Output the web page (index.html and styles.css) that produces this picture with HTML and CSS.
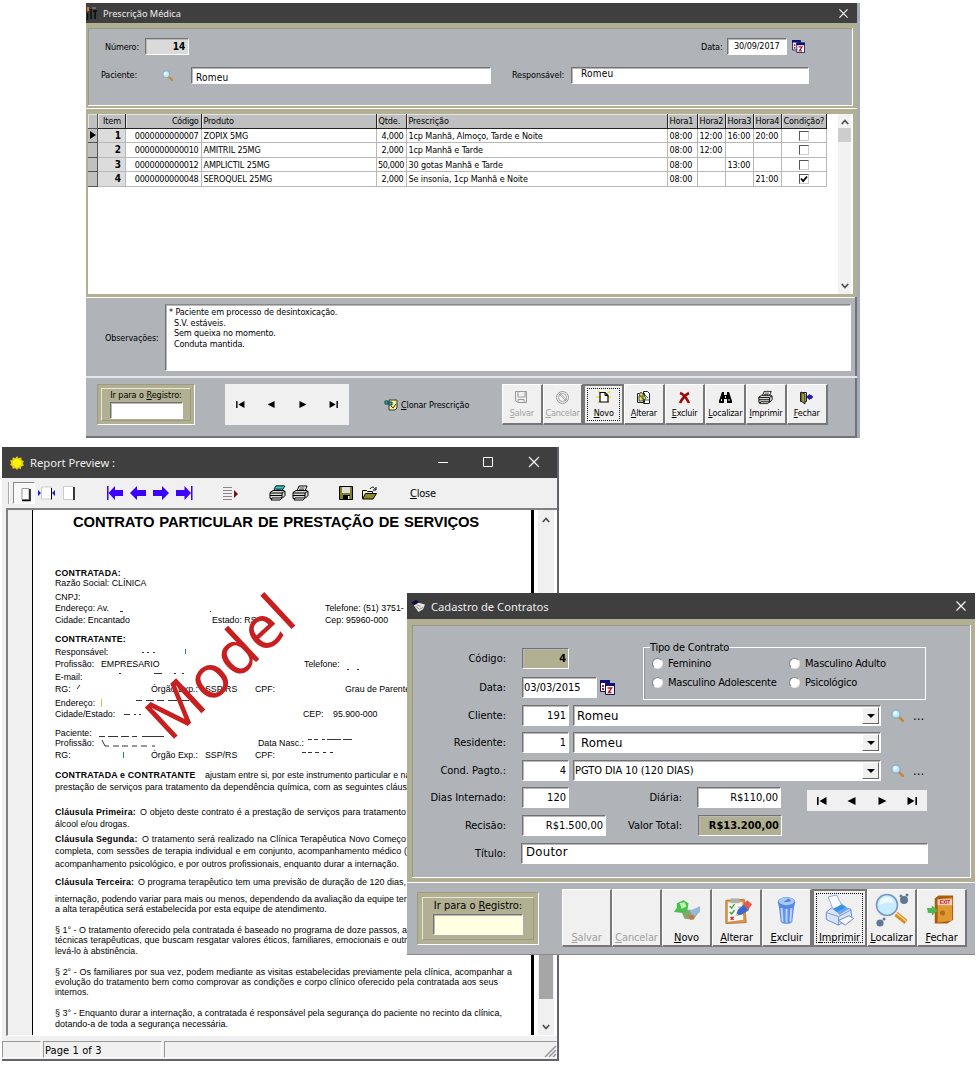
FILE: index.html
```html
<!DOCTYPE html>
<html lang="pt-BR">
<head>
<meta charset="utf-8">
<title>Prescrição Médica</title>
<link rel="stylesheet" href="styles.css">
</head>
<body>
<svg width="0" height="0" class="defs">
  <symbol id="lens" viewBox="0 0 12 12"><path d="M7 7l4 4" stroke="#c9862c" stroke-width="2.2" stroke-linecap="round"/><circle cx="4.600" cy="4.600" r="3.800" fill="#bfe6fb" stroke="#7aa9c8"/><circle cx="4" cy="3.800" r="1.700" fill="#f4fcff"/></symbol>
  <symbol id="cal" viewBox="0 0 15 15"><path d="M.5.5h9v11h-9z" fill="#fff" stroke="#101060"/><path d="M0 0h10v3H0z" fill="#10106e"/><path d="M2 5h2v2H2zM2 8h2v2H2z" fill="#b02030"/><path d="M5.5 3.5h9v11h-9z" fill="#fff" stroke="#101060"/><path d="M5 3h10v3H5z" fill="#10106e"/><path d="M7.500 8h4l-3 4.500h3" fill="none" stroke="#c01828" stroke-width="1.500"/></symbol>
  <symbol id="first" viewBox="0 0 10 8"><path d="M0 0h1.600v8H0zM9.500 0v8L2.500 4z"/></symbol>
  <symbol id="prev" viewBox="0 0 10 8"><path d="M8.500 0v8L.5 4z"/></symbol>
  <symbol id="next" viewBox="0 0 10 8"><path d="M1.500 0v8l8-4z"/></symbol>
  <symbol id="last" viewBox="0 0 10 8"><path d="M8.400 0H10v8H8.400zM.5 0v8l7-4z"/></symbol>
  <symbol id="print" viewBox="0 0 17 16"><path d="M5 6l2-5h8l-2 5z" fill="#fff" stroke="#000"/><path d="M7.500 3h5M7 4.800h5" stroke="#000" stroke-width=".8"/><path d="M1 7.500l3-2h11l1 1v4l-3 3H1z" fill="#d8d8d0" stroke="#000"/><path d="M1 8h12l3-2M13 8v5M1 10.500h12" fill="none" stroke="#000"/><path d="M3 13l-1 2h9l2-2z" fill="#fff" stroke="#000"/></symbol>
  <symbol id="up" viewBox="0 0 8 6"><path d="M.8 5L4 1.500 7.200 5" fill="none" stroke="#505050" stroke-width="1.800"/></symbol>
  <symbol id="down" viewBox="0 0 8 6"><path d="M.8 1L4 4.500 7.200 1" fill="none" stroke="#505050" stroke-width="1.800"/></symbol>
  <symbol id="x" viewBox="0 0 10 10"><path d="M.5.5l9 9M9.500.5l-9 9" stroke="#fff" stroke-width="1.200"/></symbol>
</svg>

<section class="win presc">
  <header class="bar">
    <svg class="app" viewBox="0 0 12 13"><path d="M1 0h2v4H1z" fill="#f06a20"/><path d="M1.500 6v7M5 2v10M9 3v9M7 4h4" stroke="#0c0c0c" stroke-width="1.500" fill="none"/><path d="M6 1h4" stroke="#999"/></svg>
    <h1>Prescrição Médica</h1>
    <svg class="close"><use href="#x"/></svg>
  </header>
  <div class="frame head">
    <div class="row r1"><label>Número:</label><div class="in num">14</div><label class="dt">Data:</label><div class="in date">30/09/2017</div><svg class="cal"><use href="#cal"/></svg></div>
    <div class="row r2"><label>Paciente:</label><svg class="lens"><use href="#lens"/></svg><div class="in pac">Romeu</div><label class="rs">Responsável:</label><div class="in resp">Romeu</div></div>
  </div>
  <div class="gridbox">
    <div class="table">
      <div class="tr th"><i></i><b>Item</b><span class="r">Código</span><span>Produto</span><span>Qtde.</span><span>Prescrição</span><span>Hora1</span><span>Hora2</span><span>Hora3</span><span>Hora4</span><span>Condição?</span></div>
      <div class="tr"><i><svg class="cur" viewBox="0 0 6 8"><path d="M0 0v8l6-4z"/></svg></i><b>1</b><span class="r">0000000000007</span><span>ZOPIX 5MG</span><span class="r">4,000</span><span>1cp Manhã, Almoço, Tarde e Noite</span><span>08:00</span><span>12:00</span><span>16:00</span><span>20:00</span><span class="c"><em></em></span></div>
      <div class="tr"><i></i><b>2</b><span class="r">0000000000010</span><span>AMITRIL 25MG</span><span class="r">2,000</span><span>1cp Manhã e Tarde</span><span>08:00</span><span>12:00</span><span></span><span></span><span class="c"><em></em></span></div>
      <div class="tr"><i></i><b>3</b><span class="r">0000000000012</span><span>AMPLICTIL 25MG</span><span class="r tight">50,000</span><span>30 gotas Manhã e Tarde</span><span>08:00</span><span></span><span>13:00</span><span></span><span class="c"><em></em></span></div>
      <div class="tr"><i></i><b>4</b><span class="r">0000000000048</span><span>SEROQUEL 25MG</span><span class="r">2,000</span><span>Se insonia, 1cp Manhã e Noite</span><span>08:00</span><span></span><span></span><span>21:00</span><span class="c"><em><svg viewBox="0 0 8 8"><path d="M1 3.500l2.200 2.500L7 1.500" fill="none" stroke="#000" stroke-width="1.800"/></svg></em></span></div>
    </div>
    <div class="sb"><svg><use href="#up"/></svg><div class="thumb"></div><svg class="dn"><use href="#down"/></svg></div>
  </div>
  <div class="obs"><label>Observações:</label><div class="in memo">* Paciente em processo de desintoxicação.<br>&nbsp; S.V. estáveis.<br>&nbsp; Sem queixa no momento.<br>&nbsp; Conduta mantida.</div></div>
  <footer class="foot">
    <div class="goto"><div><label>Ir para o <u>R</u>egistro:</label><div class="in"></div></div></div>
    <div class="nav"><svg><use href="#first"/></svg><svg><use href="#prev"/></svg><svg><use href="#next"/></svg><svg><use href="#last"/></svg></div>
    <div class="clone"><svg viewBox="0 0 14 12"><path d="M5 1h8v8l-2 2H5z" fill="#f4f090" stroke="#333"/><path d="M1 2h3v3H1zM5 3h3v3H5z" fill="#48b0b0" stroke="#064848"/><path d="M7 7l2 2 3-4" stroke="#333" fill="none"/></svg><span><u>C</u>lonar Prescrição</span></div>
    <div class="btns">
      <div class="btn off"><svg viewBox="0 0 15 15"><path d="M1.500 1.500h11v11h-9l-2-2zM4 2v5h7V2M4 12V9.500h6V12" fill="none" stroke="#999"/></svg><span><u>S</u>alvar</span></div>
      <div class="btn off"><svg viewBox="0 0 15 15"><circle cx="7.500" cy="7.500" r="6" fill="none" stroke="#999"/><circle cx="7.500" cy="7.500" r="4" fill="none" stroke="#aaa"/><path d="M4 4l7 7M5 3l7 7" stroke="#999" stroke-width=".8"/></svg><span><u>C</u>ancelar</span></div>
      <div class="btn focus"><svg viewBox="0 0 15 15"><path d="M2 1l11 12M14 1L2 13M0 7h15" stroke="#f0e420" stroke-width="1.400"/><path d="M4 2.500h5l3 3V12H4z" fill="#fff" stroke="#000" stroke-width="1.200"/><path d="M9 2.500v3h3" fill="none" stroke="#000"/></svg><span><u>N</u>ovo</span></div>
      <div class="btn"><svg viewBox="0 0 15 15"><path d="M1.500 3.500h7v9h-7zM7.500 1.500h4l2 2v10h-6z" fill="#fff" stroke="#222"/><path d="M3 6h4v5H3zM5 2l5 6-1 2-6-5z" fill="#e8e050" stroke="#554"/><path d="M9 5l3 3M9 10h4" stroke="#087878"/></svg><span><u>A</u>lterar</span></div>
      <div class="btn"><svg viewBox="0 0 15 15"><path d="M3 3c3 1 7 6 9 10M12 3C8 5 5 9 3 13" stroke="#a00808" stroke-width="2.600" fill="none"/></svg><span><u>E</u>xcluir</span></div>
      <div class="btn"><svg viewBox="0 0 15 15"><path d="M4 2h2v3h3V2h2l3 9v2H9V9H6v4H1v-2z"/><path d="M3.500 9v2M11 9v2M7.500 6v2" stroke="#ddd"/></svg><span><u>L</u>ocalizar</span></div>
      <div class="btn"><svg viewBox="0 0 17 16"><use href="#print"/></svg><span><u>I</u>mprimir</span></div>
      <div class="btn"><svg viewBox="0 0 15 15"><path d="M1.500 2.500h6v9h-6z" fill="#fff" stroke="#222"/><path d="M2 2l4 2v10l-4-3z" fill="#9a9a30" stroke="#222"/><path d="M8 7h6M11 4.500L8.500 7 11 9.500M12 5v4" stroke="#1010a0" stroke-width="1.500" fill="none"/></svg><span><u>F</u>echar</span></div>
    </div>
  </footer>
</section>

<section class="win report">
  <header class="bar">
    <svg class="app" viewBox="0 0 16 16"><path d="M8 0l1.800 2.500L13 1.500l.2 3L16 6l-1.300 2.300L16 11l-3 .8-.5 3-3-.8L8 16l-2-2-3 .7-.5-3L0 10l1.300-2L0 5l2.800-.7L3.300 1.500l3 1z" fill="#e8c818"/><circle cx="8" cy="8" r="5" fill="#fff600"/></svg>
    <h1>Report Preview :</h1>
    <svg class="ctl" viewBox="0 0 92 12"><path d="M0 6.500h10" stroke="#fff"/><path d="M45.500 1.500h9v9h-9z" fill="none" stroke="#fff"/><path d="M91 1l10 10M101 1L91 11" stroke="#fff" stroke-width="1.200"/></svg>
  </header>
  <div class="tools">
    <div class="grip"></div>
    <div class="pressed"><svg width="10" height="13"><path d="M1 .5h7v11H1z" fill="#fff" stroke="#999"/><path d="M9 1v11.500H1" fill="none" stroke="#000" stroke-width="1.500"/></svg></div>
    <svg class="t2" width="17" height="14" viewBox="0 0 17 14"><path d="M3.500 1h10v12h-10z" fill="#fff" stroke="#ccc"/><path d="M13.500 2v11.500" stroke="#000"/><path d="M0 4v6l3-3zM17 4v6l-3-3z" fill="#1c1ccf"/></svg>
    <svg class="t3" width="12" height="14"><path d="M.5.5h10v13H.5z" fill="#fff" stroke="#ccc"/><path d="M11 1v13" stroke="#000" stroke-width="1.500"/></svg>
    <svg class="arrows" width="86" height="14" viewBox="0 0 86 14" fill="#3b00ff"><path d="M0 0h1.500v14H0zM1.500 7L8 0v4h8v6H8v4zM23 7l7-7v4h9v6h-9v4zM62 7l-7-7v4h-9v6h9v4zM84 7l-6.500-7v4H69v6h8.500v4zM84 0h1.500v14H84z"/></svg>
    <svg class="t4" width="16" height="13"><path d="M0 .5h9M0 3.500h9M0 6.500h9M0 9.500h9M0 12.500h9" stroke="#888"/><path d="M11 3v8l4-4z" fill="#701010"/></svg>
    <svg class="t5" width="17" height="16"><use href="#print"/><path d="M7 1h9l-2 3H5z" fill="#40c8c8" stroke="#044"/></svg>
    <svg class="t6" width="17" height="16"><use href="#print"/></svg>
    <svg class="t7" width="14" height="14"><path d="M.5.5h13v13H.5z" fill="#808020" stroke="#000"/><path d="M3 1h8v6H3z" fill="#ddd"/><path d="M4 9h7v5H4z"/><path d="M9 10h1.500v3H9z" fill="#fff"/></svg>
    <svg class="t8" width="15" height="14"><path d="M.5 12V4.500h4l1 1h5V8" fill="#f4f0a0" stroke="#000"/><path d="M.5 13l3-5.500h11L11 13z" fill="#8a8a20" stroke="#000"/><path d="M8 3c2-3 4-2 5 0m1-2v3h-3" fill="none" stroke="#000"/></svg>
    <span class="cl"><u>C</u>lose</span>
  </div>
  <div class="view">
    <div class="page">
      <h2>CONTRATO PARTICULAR DE PRESTAÇÃO DE SERVIÇOS</h2>
      <div class="ln g45"><b>CONTRATADA:</b></div>
      <div class="ln g0">Razão Social: CLÍNICA</div>
      <div class="ln g4">CNPJ:</div>
      <div class="ln g1"><span class="w270">Endereço: Av.</span><span>Telefone: (51) 3751-</span></div>
      <div class="ln g2"><span class="w157">Cidade: Encantado</span><span class="w113">Estado: RS</span><span>Cep: 95960-000</span></div>
      <div class="ln g9"><b>CONTRATANTE:</b></div>
      <div class="ln g3">Responsável:</div>
      <div class="ln g2"><span class="w46">Profissão:</span><span class="w203">EMPRESARIO</span><span>Telefone:</span></div>
      <div class="ln g3">E-mail:</div>
      <div class="ln g2"><span class="w96">RG:</span><span class="w54">Órgão Exp.:</span><span class="w50">SSP/RS</span><span class="w90">CPF:</span><span>Grau de Parentesco:</span></div>
      <div class="ln g4">Endereço:</div>
      <div class="ln g1"><span class="w248">Cidade/Estado:</span><span class="w31">CEP:</span><span>95.900-000</span></div>
      <div class="ln g9">Paciente:</div>
      <div class="ln g0"><span class="w203">Profissão:</span><span>Data Nasc.:</span></div>
      <div class="ln g2"><span class="w96">RG:</span><span class="w54">Órgão Exp.:</span><span class="w50">SSP/RS</span><span>CPF:</span></div>
      <div class="ln g10"><b class="w150">CONTRATADA e CONTRATANTE</b><span>ajustam entre si, por este instrumento particular e na melhor</span></div>
      <div class="ln g2"><span class="j w352">prestação de serviços para tratamento da dependência química, com as seguintes cláus</span></div>
      <div class="ln g15"><b class="w85">Cláusula Primeira:</b><span class="j w266">O objeto deste contrato é a prestação de serviços para tratamento</span></div>
      <div class="ln g2">álcool e/ou drogas.</div>
      <div class="ln g5"><b class="w87">Cláusula Segunda:</b><span class="j w264">O tratamento será realizado na Clínica Terapêutica Novo Começo</span></div>
      <div class="ln g2"><span class="j w352">completa, com sessões de terapia individual e em conjunto, acompanhamento médico (</span></div>
      <div class="ln g3"><span class="j w344">acompanhamento psicológico, e por outros profissionais, enquanto durar a internação.</span></div>
      <div class="ln g8"><b class="w83">Cláusula Terceira:</b><span class="j w268">O programa terapêutico tem uma previsão de duração de 120 dias,</span></div>
      <div class="ln g7"><span class="j w352">internação, podendo variar para mais ou menos, dependendo da avaliação da equipe tera</span></div>
      <div class="ln g0"><span class="j w271">a alta terapêutica será estabelecida por esta equipe de atendimento.</span></div>
      <div class="ln g11"><span class="j w352">§ 1° - O tratamento oferecido pela contratada é baseado no programa de doze passos, a</span></div>
      <div class="ln g0"><span class="j w352">técnicas terapêuticas, que buscam resgatar valores éticos, familiares, emocionais e outr</span></div>
      <div class="ln g1">levá-lo à abstinência.</div>
      <div class="ln g11"><span class="j w457">§ 2° - Os familiares por sua vez, podem mediante as visitas estabelecidas previamente pela clínica, acompanhar a</span></div>
      <div class="ln g0"><span class="j w443">evolução do tratamento bem como comprovar as condições e corpo clínico oferecido pela contratada aos seus</span></div>
      <div class="ln g0">internos.</div>
      <div class="ln g11"><span class="j w447">§ 3° - Enquanto durar a internação, a contratada é responsável pela segurança do paciente no recinto da clínica,</span></div>
      <div class="ln g1"><span class="j w173">dotando-a de toda a segurança necessária.</span></div>
      <svg class="specks" width="498" height="260" viewBox="33 510 498 260" fill="none" stroke="#333"><path d="M120 611.500h3M210 611.500h1M142 652.500h2m3 0h2m4 0h2M347 669.500h2m8 0h2M119 673.500h2m33 0h8m12 0h2m6 0h2M80 685l-3 4M136 700.500h6m4 0h8m3 0h7m4 0h9m4 0h8M124 714.500h6m4 0h2m3 0h2M99 736.500h6m3 0h10m3 0h8m3 0h5m5 0h22M102 740l3 6h4m4 0h6m3 0h6m4 0h5m4 0h6m5 0h3M308 739.500h4m2 0h4m4 0h3m2 0h14m2 0h9M302 752.500h4m2 0h4m3 0h4m4 0h3m4 0h3"/><path d="M185.500 649v5M123.500 752v6" stroke="#2080b8"/><path d="M101.500 699v8" stroke="#f0b060"/></svg>
      <div class="model">Model</div>
    </div>
    <div class="sb"><svg><use href="#up"/></svg><div class="thumb"></div><svg class="dn"><use href="#down"/></svg></div>
  </div>
  <footer class="status"><div class="s1"></div><div class="s2">Page 1 of 3</div><div class="s3"><svg width="12" height="12"><path d="M1 12L12 1M5 12l7-7M9 12l3-3" stroke="#999" stroke-width="1.500"/></svg></div></footer>
</section>

<section class="win cad">
  <header class="bar">
    <svg class="app" viewBox="0 0 16 13"><path d="M0 3l5-3 4 2-4 4z" fill="#10103a"/><path d="M3 6l5-3 7 2-2 5-5 3z" fill="#e8e8e0"/><path d="M5 7l4 3 4-2M6 5l4 2" stroke="#888" fill="none"/></svg>
    <h1>Cadastro de Contratos</h1>
    <svg class="close"><use href="#x"/></svg>
  </header>
  <div class="frame">
    <div class="top">
      <div class="tl">
        <div class="row"><label>Código:</label><div class="in cod">4</div></div>
        <div class="row"><label>Data:</label><div class="in dta">03/03/2015</div><svg class="cal"><use href="#cal"/></svg></div>
      </div>
      <fieldset><legend>Tipo de Contrato</legend><div><span><i></i>Feminino</span><span><i></i>Masculino Adulto</span><span><i></i>Masculino Adolescente</span><span><i></i>Psicológico</span></div></fieldset>
    </div>
    <div class="row"><label>Cliente:</label><div class="in n">191</div><div class="in combo rom">Romeu<div class="dd"></div></div><svg class="lens"><use href="#lens"/></svg><span class="dots">...</span></div>
    <div class="row"><label>Residente:</label><div class="in n">1</div><div class="in combo rom res">Romeu<div class="dd"></div></div></div>
    <div class="row c2"><label>Cond. Pagto.:</label><div class="in n">4</div><div class="in combo">PGTO DIA 10 (120 DIAS)<div class="dd"></div></div><svg class="lens"><use href="#lens"/></svg><span class="dots">...</span></div>
    <div class="duo">
      <div class="lft">
        <div class="row"><label>Dias Internado:</label><div class="in n">120</div><label class="l2 e1">Diária:</label><div class="in v1">R$110,00</div></div>
        <div class="row"><label>Recisão:</label><div class="in v0">R$1.500,00</div><label class="l2 e2">Valor Total:</label><div class="in v2">R$13.200,00</div></div>
      </div>
      <div class="nav"><svg><use href="#first"/></svg><svg><use href="#prev"/></svg><svg><use href="#next"/></svg><svg><use href="#last"/></svg></div>
    </div>
    <div class="row"><label>Título:</label><div class="in tit">Doutor</div></div>
  </div>
  <footer class="foot">
    <div class="goto"><div><label>Ir para o <u>R</u>egistro:</label><div class="in"></div></div></div>
    <div class="btns">
      <div class="btn off"><span><u>S</u>alvar</span></div>
      <div class="btn off"><span><u>C</u>ancelar</span></div>
      <div class="btn"><svg viewBox="0 0 32 32"><path d="M6 9l7-3 5 3-1 7 3 1-8 2-9-1 3-4z" fill="#48c050"/><path d="M9 9l5-1 2 4-5 3z" fill="#c0f4b0"/><path d="M11 18l9-2 8 3-5 7-9-1z" fill="#80a868"/><path d="M18 15c4 2 6-1 12-3v6l-7 5z" fill="#98b8d8"/><path d="M18 22l5-1 1 4-4 1z" fill="#d07048"/></svg><span><u>N</u>ovo</span></div>
      <div class="btn"><svg viewBox="0 0 32 32"><path d="M5 6l19-1 2 24-21 1z" fill="#d8954c" stroke="#b87838"/><path d="M7 8h15l1 18-16 2z" fill="#f8f8f8"/><path d="M10 4h9v5h-9z" fill="#b0b0b0"/><path d="M9 12l2 2 3-4M9 18l2 2 3-4" fill="none" stroke="#48a838" stroke-width="1.500"/><path d="M10 23l3 3m0-3l-3 3" stroke="#c83030" stroke-width="1.500"/><path d="M17 13h4M17 17h3" stroke="#aaa"/><path d="M15 22l3-7 6-5 5 6-8 5z" fill="#3868d0"/><path d="M23 10l4-4 5 4-4 6z" fill="#e85848"/><path d="M14 23l2-4 2 2z" fill="#eed0a0"/></svg><span><u>A</u>lterar</span></div>
      <div class="btn"><svg viewBox="0 0 32 32"><path d="M8 11l2 17c2 3 10 3 12 0l2-17z" fill="#6490e8"/><path d="M11 14l1 14M16 15v14M21 14l-1 14" stroke="#b8d4ff" stroke-width="2"/><path d="M7 8c0-7 18-7 18 0l-1 4c-3 3-13 3-16 0z" fill="#5888e0"/><ellipse cx="16" cy="7" rx="8" ry="4" fill="#a8c8f8"/><path d="M13 8l5-4 3 3z" fill="#4878d0"/></svg><span><u>E</u>xcluir</span></div>
      <div class="btn focus"><svg viewBox="0 0 32 34"><path d="M2 18l8-6 18 3 1 8-14 9-13-6z" fill="#d8e4fa" stroke="#6888c8"/><path d="M3 19l12 4 13-7M15 23v9" stroke="#7890d0" fill="none"/><path d="M9 14l9-5 8 6-10 6z" fill="#68a8f0"/><path d="M4 2l9-2 6 12-10 3z" fill="#f8fbff" stroke="#90a8d8"/><path d="M9 15l9-5 5 3-10 5z" fill="#3890e8"/><path d="M15 27l11-5 5 3-9 7z" fill="#f4f8ff" stroke="#7088c0"/></svg><span><u>I</u>mprimir</span></div>
      <div class="btn"><svg class="wide" viewBox="0 0 34 32"><path d="M21 20l10 8" stroke="#d88c20" stroke-width="5"/><path d="M21 19l10 8" stroke="#f8d888" stroke-width="1.500"/><circle cx="12" cy="11" r="10.500" fill="#c8ecff" stroke="#7898c0" stroke-width="1.600"/><path d="M4 11c0-10 14-10 15-2-6-2-9 0-15 2z" fill="#f0fbff"/><circle cx="29" cy="6" r="4" fill="#607890"/><circle cx="26" cy="2" r="1.500" fill="#607890"/><circle cx="32" cy="1" r="1.500" fill="#607890"/><circle cx="5" cy="29" r="3.600" fill="#607890"/><circle cx="9" cy="25" r="1.500" fill="#607890"/></svg><span><u>L</u>ocalizar</span></div>
      <div class="btn"><svg viewBox="0 0 32 32"><path d="M9 4l4-3h15v25l-6 4H9z" fill="#a85c10"/><path d="M12 5l15-2v24l-15 2z" fill="#e09830"/><path d="M12 5h15v6H12z" fill="#f4d0c8"/><text x="19.500" y="10" text-anchor="middle" class="exit">EXIT</text><circle cx="17" cy="19" r="2.600" fill="#b86c18"/><path d="M1 14h5v-3l6 5.500L6 22v-3H2z" fill="#50b850"/></svg><span><u>F</u>echar</span></div>
    </div>
  </footer>
</section>
</body>
</html>
```

FILE: styles.css
```css
* { box-sizing: border-box; }
body { margin: 0; background: #fff; position: relative; width: 980px; height: 1080px; overflow: hidden; font-family: "DejaVu Sans Condensed", "DejaVu Sans", sans-serif; font-stretch: condensed; color: #000; }
.defs { position: absolute; }
.win { position: absolute; display: flex; flex-direction: column; white-space: nowrap; background: #b0b4b8; }
svg { display: block; flex: none; overflow: visible; }
h1, h2 { margin: 0; font-weight: 400; }
.bar { display: flex; align-items: center; background: #3f3f40; color: #fff; flex: none; }
.bar h1 { font-family: "Noto Sans", "Open Sans", sans-serif; font-stretch: normal; color: #eee; margin-right: auto; }
.close { width: 9px; height: 9px; }
.in { background: #fff; border: 1px solid; border-color: #707274 #fff #fff #707274; box-shadow: inset 1px 1px #b8b8b8; flex: none; }
.row { display: flex; align-items: center; }
.btns { display: flex; }
.btn { background: #f0f0f0; border: 1px solid; border-color: #fff #777 #777 #fff; border-right-width: 2px; border-bottom-width: 2px; display: flex; flex-direction: column; align-items: center; flex: none; }
.off { color: #a0a0a0; }
.nav { background: #f0f0f0; display: flex; align-items: center; flex: none; }
.goto { background: #b2b092; border: 1px solid; border-color: #9c9a80 #fff #fff #9c9a80; flex: none; }
.goto > div { border: 1px solid #e8e8d8; border-right-color: #9c9a80; border-bottom-color: #9c9a80; display: flex; flex-direction: column; align-items: center; }
.frame { background: #b0b4b8; border: solid #b2b092; box-shadow: inset -1px -1px #fff, inset 1px 1px #98988c; flex: none; }
.sb { background: #f0f0f0; display: flex; flex-direction: column; align-items: center; flex: none; }
.sb svg { width: 8px; height: 6px; }
.sb .thumb { background: #cdcdcd; width: 100%; }
.sb .dn { margin-top: auto; }

/* prescription window */
.presc { left: 86px; top: 3px; width: 774px; height: 435px; font-size: 9px; letter-spacing: -.12px; border-right: 3px solid #a4acbc; box-shadow: inset -2px -2px #70747a; }
.presc .bar { height: 20px; padding: 0 9px 0 0; }
.presc .app { width: 12px; height: 13px; margin-right: 5px; }
.presc h1 { font-size: 9.200px; letter-spacing: 0; }
.presc .head { height: 86px; border-width: 5px 4px 3px 2px; padding: 10px 0 0 13px; }
.presc .r1 { height: 17px; padding-left: 4px; }
.presc .num { width: 44px; height: 17px; margin-left: 6px; background: #dadada; text-align: right; padding: 2px 3px 0 0; font-weight: 700; line-height: 11px; font-size: 10px; }
.presc .dt { margin-left: 512px; width: 26px; }
.presc .date { width: 60px; height: 17px; line-height: 14px; padding-left: 6px; }
.presc .cal { width: 13px; height: 13px; margin-left: 5px; }
.presc .r2 { height: 18px; margin-top: 11px; }
.presc .r2 > label:first-child { width: 61px; }
.presc .r2 .lens { width: 11px; height: 11px; margin-right: 18px; }
.presc .pac, .presc .resp { width: 300px; height: 17px; padding: 3px 0 0 4px; font-size: 10px; line-height: 13px; letter-spacing: .2px; }
.presc .rs { width: 59px; margin-left: 21px; }
.presc .resp { width: 238px; padding: 0 0 0 9px; line-height: 11px; }
.gridbox { height: 188px; border: solid #b2b092; border-width: 5px 4px 3px 2px; background: #fff; display: flex; flex: none; box-shadow: 0 1px #fff, 0 -1px #fff; }
.table { width: 750px; flex: none; }
.tr { display: grid; grid-template-columns: 10px 28px 76px 175px 30px 261px 30px 28px 28px 28px 45px; height: 14.600px; }
.tr > * { border-right: 1px solid #b8b8b8; border-bottom: 1px solid #b8b8b8; padding: 0 1.500px; line-height: 14px; overflow: hidden; font-style: normal; }
.tr > b { background: #dcdcdc; text-align: right; padding-right: 4px; font-size: 10px; }
.tr > i { background: #c0c0c0; border-color: #555; padding: 2px; }
.tr > .r { text-align: right; padding: 0 2.500px 0 0; display: flex; justify-content: flex-end; letter-spacing: -.25px; }
.tr > .tight { letter-spacing: -.4px; padding-right: 2px; }
.cur { width: 6px; height: 8px; }
.th > * { background: #c0c0c0; border-color: #222; box-shadow: inset 1px 1px #e4e4e4; }
.tr.th > b { background: #c0c0c0; font-weight: 400; font-size: 9px; }
.tr > .c { display: flex; justify-content: center; align-items: flex-start; padding-top: 2px; }
.c em { width: 10px; height: 10px; border: 1px solid; border-color: #555 #ccc #ccc #555; background: #fff; }
.c em svg { width: 8px; height: 8px; }
.presc .gridbox .sb { width: 13px; padding: 5px 0; background: #f2f2f2; }
.presc .gridbox .thumb { height: 14px; margin-top: 3px; }
.obs { height: 81px; flex: none; border-bottom: 2px solid #e4e6e8; display: flex; padding: 8px 6px 6px 19px; align-items: center; box-shadow: inset -2px 0 #70747a; }
.obs label { width: 60px; }
.memo { flex: 1; height: 67px; line-height: 10.500px; padding: 2px 3px; border-top-color: #888; }
.presc .foot { display: flex; padding: 6px 0 0 11px; }
.presc .goto { width: 98px; height: 41px; padding: 3px; }
.presc .goto > div { height: 33px; padding-top: 1px; }
.presc .goto label { line-height: 11px; letter-spacing: -.05px; }
.presc .goto .in { width: 73px; height: 17px; margin-top: 1px; }
.presc .nav { width: 124px; height: 41px; margin-left: 30px; padding-left: 11px; gap: 22px; }
.nav svg { width: 9px; height: 7px; }
.clone { display: flex; align-items: center; height: 41px; margin-left: 35px; gap: 3px; width: 118px; }
.clone svg { width: 14px; height: 12px; }
.presc .btn { width: 40.700px; height: 41px; padding-top: 5px; letter-spacing: -.2px; }
.presc .btn svg { width: 15px; height: 15px; }
.presc .btn span { line-height: 12px; margin-top: 2px; }
.presc .focus, .cad .focus { border: 2px solid #777; outline: 1px dotted #111; outline-offset: -5px; }
.presc .focus { padding-top: 4px; }

/* report preview */
.report { left: 2px; top: 447px; width: 557px; height: 614px; background: #f0f0f0; border-right: 2px solid #62666c; border-bottom: 2px solid #62666c; }
.report .bar { height: 31px; padding: 0 8px; width: 555px; }
.report .app { width: 14px; height: 14px; margin-right: 6px; }
.report h1 { font-size: 11.200px; }
.ctl { width: 92px; height: 12px; margin: -2px 19px 0 0; }
.tools { height: 30px; display: flex; align-items: center; flex: none; padding-left: 6px; }
.grip { width: 2px; height: 22px; border-left: 1px solid #aaa; border-right: 1px solid #fff; }
.pressed { width: 22px; height: 22px; margin-left: 3px; border: 1px solid; border-color: #888 #fff #fff #888; background: #f8f8f8; display: flex; justify-content: center; align-items: center; padding: 3px 0 0 3px; }
.t2 { margin-left: 3px; }
.t3 { margin-left: 8px; }
.arrows { margin-left: 32px; }
.t4 { margin-left: 30px; }
.t5 { margin-left: 30px; }
.t6 { margin-left: 6px; }
.t7 { margin-left: 30px; }
.t8 { margin-left: 9px; }
.cl { margin-left: 33px; font-size: 11px; letter-spacing: -.2px; }
.view { height: 528px; margin-left: 4px; border-top: 2px solid #808080; border-left: 2px solid #808080; border-bottom: 1px solid #fff; background: #fff; display: flex; overflow: hidden; flex: none; }
.page { border-left: 24px solid #f0f0f0; box-shadow: inset 1px 0 #000, inset -3px 0 #000; width: 526px; padding: 4px 0 0 23px; flex: none; position: relative; font-family: "Liberation Sans", Arial, sans-serif; font-stretch: normal; font-size: 8.800px; }
.page h2 { font-size: 14.800px; font-weight: 700; width: 406px; margin-left: 18px; line-height: 17px; text-align-last: justify; letter-spacing: -.15px; }
.ln { height: 10px; line-height: 10px; display: flex; }
.ln > * { flex: none; }
.ln b { letter-spacing: .2px; }
.j { text-align-last: justify; letter-spacing: 0; font-size: 8.950px; }
.g0 { margin-top: 0; } .g1 { margin-top: 1px; } .g2 { margin-top: 2px; } .g3 { margin-top: 3px; } .g4 { margin-top: 4px; } .g5 { margin-top: 5px; }
.g7 { margin-top: 7px; } .g8 { margin-top: 8px; } .g9 { margin-top: 9px; } .g10 { margin-top: 10px; } .g11 { margin-top: 11px; } .g15 { margin-top: 15px; } .g45 { margin-top: 37px; }
.w31 { width: 30px; } .w46 { width: 46px; } .w50 { width: 50px; } .w54 { width: 54px; } .w83 { width: 83px; } .w85 { width: 85px; } .w87 { width: 87px; } .w90 { width: 90px; } .w96 { width: 96px; }
.w113 { width: 113px; } .w150 { width: 150px; } .w157 { width: 157px; } .w173 { width: 173px; } .w203 { width: 203px; } .w248 { width: 248px; } .w264 { width: 264px; } .w266 { width: 266px; } .w268 { width: 268px; }
.w270 { width: 270px; } .w271 { width: 271px; } .w344 { width: 344px; } .w352 { width: 352px; } .w443 { width: 443px; } .w447 { width: 447px; } .w457 { width: 457px; }
.specks { position: absolute; left: 1px; top: 0; }
.model { position: absolute; left: 137px; top: 156px; height: 60px; line-height: 60px; font-family: "Noto Sans", "Open Sans", sans-serif; font-size: 60px; color: #c82020; transform-origin: 0 52px; transform: translate(0, 24px) rotate(-43deg); }
.report .sb { width: 16px; margin-left: 4px; padding: 7px 0 5px; }
.report .thumb { height: 96px; margin-top: 380px; background: #a6a6a6; width: 14px; }
.status { display: flex; gap: 2px; padding-top: 5px; height: 22px; font-size: 11px; flex: none; }
.status > div { border: 1px solid; border-color: #999 #fff #fff #999; line-height: 18px; }
.s1 { width: 39px; } .s2 { width: 119px; padding-left: 1px; letter-spacing: .1px; } .s3 { flex: 1; display: flex; justify-content: flex-end; align-items: flex-end; }

/* contract form */
.cad { left: 407px; top: 593px; width: 568px; height: 362px; font-size: 11px; letter-spacing: -.02px; border-bottom: 1px solid #888; }
.cad .bar { height: 26px; padding: 0 9px 0 4px; }
.cad .bar .app { width: 15px; height: 12px; margin-right: 5px; }
.cad h1 { font-size: 11.200px; letter-spacing: 0; }
.cad .close { width: 10px; height: 10px; }
.cad .frame { height: 263px; border-width: 6px 4px 4px 5px; padding-top: 23px; }
.cad .frame .row label:first-child { width: 94px; text-align: right; margin-right: 16px; }
.cad .row .in { height: 21px; line-height: 17px; padding: 1px 2px 1px 4px; }
.cad .row { height: 21px; margin-bottom: 6px; }
.top { display: flex; height: 57px; }
.tl .row { margin-bottom: 8px; }
.cad .in.cod { width: 47px; background: #b2b092; text-align: right; font-weight: 700; }
.cad .row .in.dta { width: 75px; padding-left: 1px; letter-spacing: -.05px; }
.cad .cal { width: 15px; height: 15px; margin-left: 3px; }
fieldset { margin: -7px 0 0 28px; width: 283px; height: 59px; border: 1px solid #fff; padding: 0; box-shadow: inset 1px 0 #909498; align-self: flex-start; letter-spacing: -.22px; }
legend { margin-left: 6px; padding: 0; line-height: 13px; }
fieldset div { display: grid; grid-template-columns: 137px 1fr; padding: 3px 0 0 8px; row-gap: 6px; }
fieldset span { display: flex; align-items: center; line-height: 13px; }
fieldset i { width: 11px; height: 11px; border-radius: 50%; background: #fff; border: 1px solid; border-color: #808080 #e8e8e8 #e8e8e8 #808080; margin-right: 5px; }
.cad .n { width: 47px; text-align: right; letter-spacing: 0; }
.cad .row .in.combo { width: 308px; margin-left: 4px; display: flex; padding: 1px 1px 1px 1px; letter-spacing: -.05px; }
.cad .row .in.rom { font-size: 13px; padding-left: 3px; letter-spacing: .2px; }
.cad .row .in.res { padding-left: 7px; }
.dd { margin-left: auto; width: 17px; height: 17px; background: #f0f0f0; border: 1px solid; border-color: #fff #666 #666 #fff; display: grid; place-items: center; }
.dd::before { content: ""; border: 4px solid transparent; border-top-color: #000; border-bottom: 0; }
.cad .lens { width: 13px; height: 13px; margin-left: 10px; }
.dots { margin-left: 9px; font-size: 13px; }
.cad .c2 { margin-top: 7px; }
.duo { display: flex; }
.lft { width: 395px; }
.duo .row { margin-bottom: 7px; }
.l2 { text-align: right; }
.e1 { width: 113px; margin-right: 15px; }
.e2 { width: 76px; margin-right: 16px; }
.cad .v0, .cad .v1, .cad .v2 { width: 84px; text-align: right; letter-spacing: 0; }
.cad .v2 { background: #b2b092; font-weight: 700; }
.cad .nav { width: 120px; height: 21px; margin-top: 3px; padding-left: 10px; gap: 20px; }
.cad .nav svg { width: 10px; height: 8px; }
.cad .row .in.tit { width: 407px; margin-left: -1px; font-size: 13px; line-height: 14px; letter-spacing: .3px; }
.cad .foot { display: flex; border-top: 1px solid #fff; padding: 6px 0 0 10px; }
.cad .goto { width: 122px; height: 53px; padding: 4px; margin-top: 3px; }
.cad .goto > div { height: 43px; padding-top: 0; }
.cad .goto label { line-height: 15px; }
.cad .goto .in { width: 90px; height: 21px; background: #ffffe1; margin-top: 1px; }
.cad .btns { margin-left: 23px; }
.cad .btn { width: 50px; height: 58px; padding-top: 4px; letter-spacing: -.15px; }
.cad .btn svg { width: 31px; height: 32px; }
.cad .btn svg.wide { width: 34px; }
.cad .btn span { margin-top: auto; line-height: 14px; }
.cad .focus { width: 55px; outline-color: #000; }
.exit { font: 700 5px "Liberation Sans", sans-serif; fill: #c02020; }
```
